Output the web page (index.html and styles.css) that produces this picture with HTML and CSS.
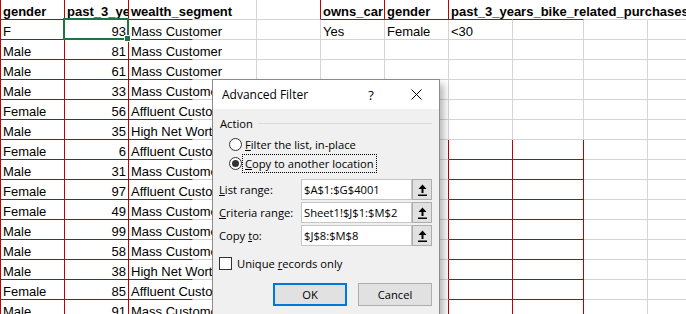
FILE: index.html
```html
<!DOCTYPE html>
<html>
<head>
<meta charset="utf-8">
<link rel="stylesheet" href="styles.css">
</head>
<body>
<div class="sheet">
  <div class="row">
    <div class="c ra rb hd">gender</div>
    <div class="c ra rb hd">past_3_years_bike_related_purchases</div>
    <div class="c rb hd ov">wealth_segment</div>
    <div class="c"></div>
    <div class="c ra"></div>
    <div class="c ra rb hd">owns_car</div>
    <div class="c ra rb hd">gender</div>
    <div class="c rb hd ov">past_3_years_bike_related_purchases</div>
    <div class="c wi rb ov"></div>
    <div class="c ov"></div>
    <div class="c ov"></div>
  </div>
  <div class="row">
    <div class="c ra rb">F</div>
    <div class="c ra rb num sel">93</div>
    <div class="c rb ov">Mass Customer</div>
    <div class="c"></div>
    <div class="c"></div>
    <div class="c">Yes</div>
    <div class="c">Female</div>
    <div class="c">&lt;30</div>
    <div class="c wi"></div>
    <div class="c"></div>
    <div class="c"></div>
  </div>
  <div class="row">
    <div class="c ra rb">Male</div>
    <div class="c ra rb num">81</div>
    <div class="c rb ov">Mass Customer</div>
    <div class="c"></div><div class="c"></div><div class="c"></div><div class="c"></div><div class="c"></div><div class="c wi"></div><div class="c"></div><div class="c"></div>
  </div>
  <div class="row">
    <div class="c ra rb">Male</div>
    <div class="c ra rb num">61</div>
    <div class="c rb ov">Mass Customer</div>
    <div class="c"></div><div class="c"></div><div class="c"></div><div class="c"></div><div class="c"></div><div class="c wi"></div><div class="c"></div><div class="c"></div>
  </div>
  <div class="row">
    <div class="c ra rb">Male</div>
    <div class="c ra rb num">33</div>
    <div class="c rb ov">Mass Customer</div>
    <div class="c"></div><div class="c"></div><div class="c"></div><div class="c"></div><div class="c"></div><div class="c wi"></div><div class="c"></div><div class="c"></div>
  </div>
  <div class="row">
    <div class="c ra rb">Female</div>
    <div class="c ra rb num">56</div>
    <div class="c rb ov">Affluent Customer</div>
    <div class="c"></div><div class="c"></div><div class="c"></div><div class="c"></div><div class="c"></div><div class="c wi"></div><div class="c"></div><div class="c"></div>
  </div>
  <div class="row">
    <div class="c ra rb">Male</div>
    <div class="c ra rb num">35</div>
    <div class="c rb ov">High Net Worth</div>
    <div class="c"></div><div class="c"></div><div class="c"></div><div class="c"></div><div class="c"></div><div class="c wi"></div><div class="c"></div><div class="c"></div>
  </div>
  <div class="row">
    <div class="c ra rb">Female</div>
    <div class="c ra rb num">6</div>
    <div class="c rb ov">Affluent Customer</div>
    <div class="c"></div><div class="c"></div><div class="c"></div><div class="c ra"></div><div class="c ra rb"></div><div class="c wi ra rb"></div><div class="c"></div><div class="c"></div>
  </div>
  <div class="row">
    <div class="c ra rb">Male</div>
    <div class="c ra rb num">31</div>
    <div class="c rb ov">Mass Customer</div>
    <div class="c"></div><div class="c"></div><div class="c"></div><div class="c ra"></div><div class="c ra rb"></div><div class="c wi ra rb"></div><div class="c"></div><div class="c"></div>
  </div>
  <div class="row">
    <div class="c ra rb">Female</div>
    <div class="c ra rb num">97</div>
    <div class="c rb ov">Affluent Customer</div>
    <div class="c"></div><div class="c"></div><div class="c"></div><div class="c ra"></div><div class="c ra rb"></div><div class="c wi ra rb"></div><div class="c"></div><div class="c"></div>
  </div>
  <div class="row">
    <div class="c ra rb">Female</div>
    <div class="c ra rb num">49</div>
    <div class="c rb ov">Mass Customer</div>
    <div class="c"></div><div class="c"></div><div class="c"></div><div class="c ra"></div><div class="c ra rb"></div><div class="c wi ra rb"></div><div class="c"></div><div class="c"></div>
  </div>
  <div class="row">
    <div class="c ra rb">Male</div>
    <div class="c ra rb num">99</div>
    <div class="c rb ov">Mass Customer</div>
    <div class="c"></div><div class="c"></div><div class="c"></div><div class="c ra"></div><div class="c ra rb"></div><div class="c wi ra rb"></div><div class="c"></div><div class="c"></div>
  </div>
  <div class="row">
    <div class="c ra rb">Male</div>
    <div class="c ra rb num">58</div>
    <div class="c rb ov">Mass Customer</div>
    <div class="c"></div><div class="c"></div><div class="c"></div><div class="c ra"></div><div class="c ra rb"></div><div class="c wi ra rb"></div><div class="c"></div><div class="c"></div>
  </div>
  <div class="row">
    <div class="c ra rb">Male</div>
    <div class="c ra rb num">38</div>
    <div class="c rb ov">High Net Worth</div>
    <div class="c"></div><div class="c"></div><div class="c"></div><div class="c ra"></div><div class="c ra rb"></div><div class="c wi ra rb"></div><div class="c"></div><div class="c"></div>
  </div>
  <div class="row">
    <div class="c ra rb">Female</div>
    <div class="c ra rb num">85</div>
    <div class="c rb ov">Affluent Customer</div>
    <div class="c"></div><div class="c"></div><div class="c"></div><div class="c ra"></div><div class="c ra rb"></div><div class="c wi ra rb"></div><div class="c"></div><div class="c"></div>
  </div>
  <div class="row">
    <div class="c ra rb">Male</div>
    <div class="c ra rb num">91</div>
    <div class="c rb ov">Mass Customer</div>
    <div class="c"></div><div class="c"></div><div class="c"></div><div class="c ra"></div><div class="c ra rb"></div><div class="c wi ra rb"></div><div class="c"></div><div class="c"></div>
  </div>
</div>

<div class="dialog">
  <div class="titlebar">
    <span class="title">Advanced Filter</span>
    <span class="help">?</span>
    <span class="close">
      <svg width="11" height="11" viewBox="0 0 11 11"><path d="M0.5 0.5 L10.5 10.5 M10.5 0.5 L0.5 10.5" stroke="#000" stroke-width="1" fill="none"/></svg>
    </span>
  </div>
  <div class="body">
    <div class="group">
      <span>Action</span>
      <span class="rule"></span>
    </div>
    <div class="opt first">
      <span class="radio"></span>
      <span class="opt-label"><u>F</u>ilter the list, in-place</span>
    </div>
    <div class="opt">
      <span class="radio on"></span>
      <span class="opt-label focus"><u>C</u>opy to another location</span>
    </div>
    <div class="field first">
      <span class="flabel"><u>L</u>ist range:</span>
      <span class="input">$A$1:$G$4001</span>
      <span class="pick"><svg width="9" height="12" viewBox="0 0 9 12"><path d="M4.5 0.5 L8.5 5 L5.5 5 L5.5 9 L3.5 9 L3.5 5 L0.5 5 Z" fill="#000"/><rect x="0" y="10.5" width="9" height="1.5" fill="#000"/></svg></span>
    </div>
    <div class="field">
      <span class="flabel"><u>C</u>riteria range:</span>
      <span class="input">Sheet1!$J$1:$M$2</span>
      <span class="pick"><svg width="9" height="12" viewBox="0 0 9 12"><path d="M4.5 0.5 L8.5 5 L5.5 5 L5.5 9 L3.5 9 L3.5 5 L0.5 5 Z" fill="#000"/><rect x="0" y="10.5" width="9" height="1.5" fill="#000"/></svg></span>
    </div>
    <div class="field">
      <span class="flabel">Copy <u>t</u>o:</span>
      <span class="input">$J$8:$M$8</span>
      <span class="pick"><svg width="9" height="12" viewBox="0 0 9 12"><path d="M4.5 0.5 L8.5 5 L5.5 5 L5.5 9 L3.5 9 L3.5 5 L0.5 5 Z" fill="#000"/><rect x="0" y="10.5" width="9" height="1.5" fill="#000"/></svg></span>
    </div>
    <div class="check">
      <span class="box"></span>
      <span>Unique <u>r</u>ecords only</span>
    </div>
    <div class="buttons">
      <span class="btn default">OK</span>
      <span class="btn">Cancel</span>
    </div>
  </div>
</div>
</body>
</html>
```

FILE: styles.css
```css
html, body {
  margin: 0;
  padding: 0;
}
body {
  width: 686px;
  height: 314px;
  overflow: hidden;
  position: relative;
  background: #fff;
  font-family: "Liberation Sans", Arial, sans-serif;
}

/* ---------- spreadsheet ---------- */
.sheet {
  width: max-content;
  border-left: 1px solid #c00000;
}
.row {
  display: flex;
  height: 20px;
}
.c {
  box-sizing: border-box;
  flex: 0 0 64px;
  width: 64px;
  height: 20px;
  border-right: 1px solid #d4d4d4;
  border-bottom: 1px solid #d4d4d4;
  padding: 0 2px;
  font-size: 13px;
  line-height: 15px;
  display: flex;
  align-items: flex-end;
  white-space: nowrap;
  overflow: hidden;
  color: #000;
}
.wi {
  flex-basis: 71px;
  width: 71px;
}
.ra { border-right-color: #c00000; }
.rb { border-bottom-color: #c00000; }
.ov {
  overflow: visible;
  border-right-color: transparent;
}
.hd { font-weight: bold; }
.num { justify-content: flex-end; }
.sel {
  position: relative;
  overflow: visible;
}
.sel::after {
  content: "";
  position: absolute;
  left: -2px;
  top: -2px;
  right: -1px;
  bottom: -1px;
  border: 2px solid #217346;
}
.sel::before {
  content: "";
  position: absolute;
  right: -3px;
  bottom: -3px;
  width: 5px;
  height: 5px;
  background: #217346;
  border: 1px solid #fff;
  z-index: 1;
}

/* ---------- dialog ---------- */
.dialog {
  position: absolute;
  left: 212px;
  top: 79px;
  width: 228px;
  height: 250px;
  box-sizing: border-box;
  border: 1px solid #8c8c8c;
  background: #f0f0f0;
  box-shadow: 5px 4px 7px -1px rgba(0, 0, 0, 0.28);
  font-family: "Open Sans", "Noto Sans", sans-serif;
  font-size: 11.2px;
  color: #000;
}
.titlebar {
  height: 29px;
  background: #fff;
  display: flex;
  align-items: center;
  padding-left: 9px;
}
.title {
  flex: 1;
  font-size: 12px;
}
.help {
  width: 30px;
  text-align: center;
  font-size: 13px;
  margin-right: 7px;
}
.close {
  width: 46px;
  height: 29px;
  display: flex;
  align-items: center;
  justify-content: center;
}
.body {
  padding: 0 7px 0 6px;
}
.group {
  margin-top: 6px;
  height: 16px;
  display: flex;
  align-items: center;
  padding-left: 1px;
}
.rule {
  flex: 1;
  height: 1px;
  background: #dcdcdc;
  margin-left: 5px;
}
.opt {
  height: 19px;
  display: flex;
  align-items: center;
  padding-left: 10px;
}
.opt.first { margin-top: 4px; }
.radio {
  box-sizing: border-box;
  width: 13px;
  height: 13px;
  border: 1px solid #333;
  border-radius: 50%;
  background: #fff;
  display: flex;
  align-items: center;
  justify-content: center;
}
.radio.on::after {
  content: "";
  width: 7px;
  height: 7px;
  border-radius: 50%;
  background: #333;
}
.opt-label {
  margin-left: 1px;
  padding: 0 2px;
  line-height: 17px;
}
.focus {
  outline: 1px dotted #000;
  outline-offset: 0;
}
.field {
  height: 21px;
  display: flex;
  align-items: center;
  margin-top: 2px;
}
.field.first { margin-top: 6px; }
.flabel {
  flex: 0 0 82px;
  width: 82px;
  white-space: nowrap;
}
.input {
  box-sizing: border-box;
  width: 111px;
  height: 21px;
  border: 1px solid #c6c6c6;
  background: #fff;
  padding-left: 2px;
  display: flex;
  align-items: center;
}
.pick {
  box-sizing: border-box;
  width: 20px;
  height: 21px;
  border: 1px solid #adadad;
  background: #e1e1e1;
  display: flex;
  align-items: center;
  justify-content: center;
}
.check {
  margin-top: 8px;
  height: 19px;
  display: flex;
  align-items: center;
}
.box {
  box-sizing: border-box;
  width: 13px;
  height: 13px;
  border: 1px solid #333;
  background: #fff;
  margin-right: 5px;
}
.buttons {
  margin-top: 10px;
  display: flex;
  justify-content: flex-end;
  gap: 11px;
}
.btn {
  box-sizing: border-box;
  width: 74px;
  height: 23px;
  border: 1px solid #adadad;
  background: #e1e1e1;
  display: flex;
  align-items: center;
  justify-content: center;
}
.btn.default {
  border: 2px solid #0078d7;
}
```
